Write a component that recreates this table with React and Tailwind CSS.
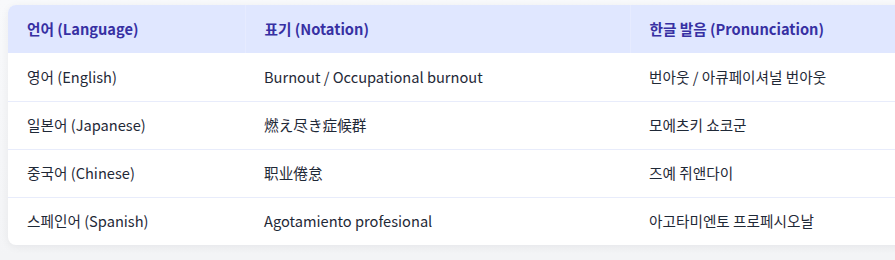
import React from "react";

const rows = [
  ["영어 (English)", "Burnout / Occupational burnout", "번아웃 / 아큐페이셔널 번아웃"],
  ["일본어 (Japanese)", "燃え尽き症候群", "모에츠키 쇼코군"],
  ["중국어 (Chinese)", "职业倦怠", "즈예 쥐앤다이"],
  ["스페인어 (Spanish)", "Agotamiento profesional", "아고타미엔토 프로페시오날"],
];

const font = {
  fontFamily:
    '"Noto Sans CJK KR", "Noto Sans CJK JP", "Noto Sans CJK SC", sans-serif',
};

export default function App() {
  return (
    <div
      className="w-[895px] h-[260px] overflow-hidden bg-gradient-to-b from-[#f8f9fb] to-[#f3f4f6] pt-[5px] pl-2"
      style={font}
    >
      <div className="w-[960px] rounded-lg bg-white shadow-[0_2px_8px_rgba(15,23,42,0.06)] overflow-hidden">
        <table className="w-full table-fixed border-collapse text-[14.65px]">
          <colgroup>
            <col className="w-[237px]" />
            <col className="w-[385px]" />
            <col />
          </colgroup>
          <thead>
            <tr className="bg-[#e0e7ff] text-[#3730a3]">
              <th className="h-12 px-[19px] text-left font-bold border-r border-[#e6ebff]">
                언어 (Language)
              </th>
              <th className="h-12 px-[19px] text-left font-bold border-r border-[#e6ebff]">
                표기 (Notation)
              </th>
              <th className="h-12 px-[19px] text-left font-bold">
                한글 발음 (Pronunciation)
              </th>
            </tr>
          </thead>
          <tbody className="text-[#1f2937]">
            {rows.map((r, i) => (
              <tr
                key={i}
                className={i < rows.length - 1 ? "border-b border-[#e8ecfb]" : ""}
              >
                {r.map((c, j) => (
                  <td key={j} className="h-12 px-[19px]">
                    {c}
                  </td>
                ))}
              </tr>
            ))}
          </tbody>
        </table>
      </div>
    </div>
  );
}
